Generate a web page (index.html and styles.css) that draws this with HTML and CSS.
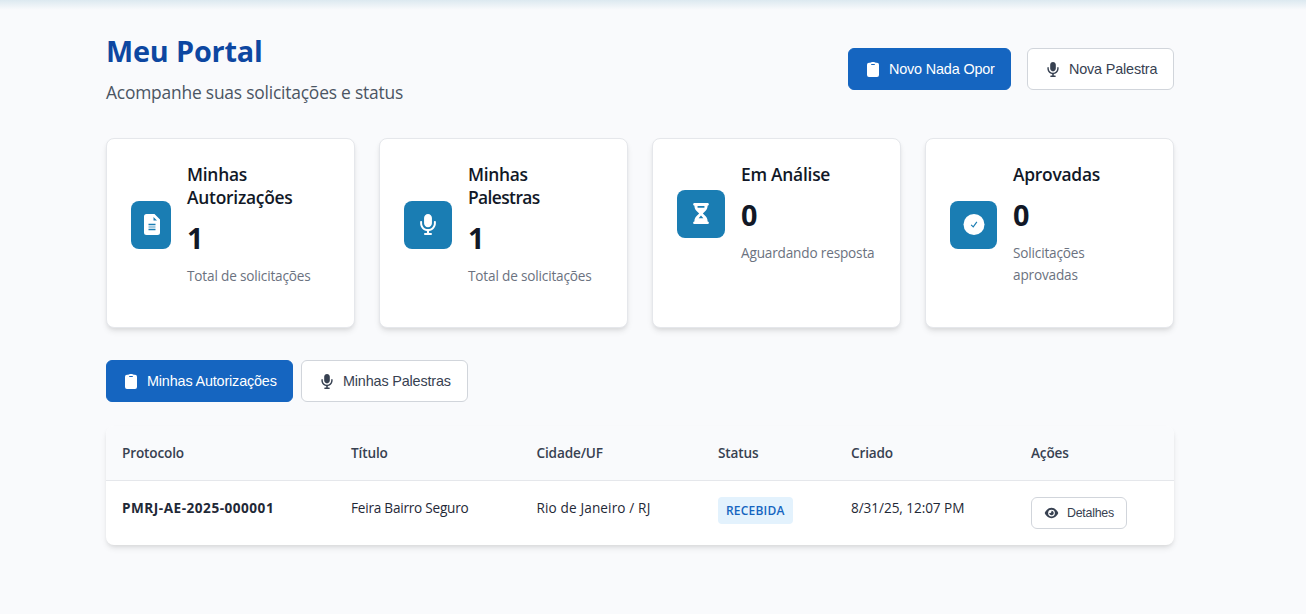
FILE: index.html
```
<!DOCTYPE html>
<html lang="pt-BR">
<head>
<meta charset="utf-8">
<title>Meu Portal</title>
<link rel="stylesheet" href="styles.css">
</head>
<body>
<svg class="sprite" aria-hidden="true">
  <symbol id="clipboard" viewBox="0 0 12 15"><path fill-rule="evenodd" d="M2 .8H3.200C3.800.2 4.600 0 6 0s2.200.2 2.800.8H10a2 2 0 0 1 2 2V13a2 2 0 0 1-2 2H2a2 2 0 0 1-2-2V2.800a2 2 0 0 1 2-2ZM4.200 2v1h3.600v-1Z"/></symbol>
  <symbol id="mic" viewBox="0 0 384 512"><path d="M192 0c-53 0-96 43-96 96v128c0 53 43 96 96 96s96-43 96-96V96c0-53-43-96-96-96zM48 192c0-13-11-24-24-24s-24 11-24 24v32c0 97 72 178 166 190v50h-46c-13 0-24 11-24 24s11 24 24 24h144c13 0 24-11 24-24s-11-24-24-24h-46v-50c94-12 166-93 166-190v-32c0-13-11-24-24-24s-24 11-24 24v32c0 80-64 144-144 144S48 304 48 224v-32z"/></symbol>
  <symbol id="file" viewBox="0 0 16 21"><path fill-rule="evenodd" d="M2.500 0H10.500L16 5.500V18.500a2.500 2.500 0 0 1-2.500 2.500h-11A2.500 2.500 0 0 1 0 18.500v-16A2.500 2.500 0 0 1 2.500 0ZM9.500 3v3.500h3.500Z"/><path class="line" d="M4.500 10.500h7M4.500 15.500h7"/><path class="line" d="M4.500 13h7" opacity=".6"/></symbol>
  <symbol id="hourglass" viewBox="0 0 384 512"><path d="M32 0C14.300 0 0 14.300 0 32s14.300 32 32 32v11c0 42.400 16.900 83.100 46.900 113.100L146.700 256l-67.800 67.900C48.900 353.900 32 394.600 32 437v11c-17.700 0-32 14.300-32 32s14.300 32 32 32h320c17.700 0 32-14.300 32-32s-14.300-32-32-32v-11c0-42.400-16.900-83.100-46.900-113.100L237.300 256l67.900-67.900c30-30 46.900-70.700 46.900-113.100V64c17.700 0 32-14.300 32-32S369.700 0 352 0H32z"/><path class="cut" d="M108 76h168v42H108zM192 306l58 64H134z"/></symbol>
  <symbol id="check" viewBox="0 0 22 22"><circle cx="11" cy="11" r="11"/><path class="tick" d="M8 11.300l2.200 2.200 3.800-5.300"/></symbol>
  <symbol id="eye" viewBox="0 0 576 512"><path fill-rule="evenodd" d="M288 32c-80.800 0-145.500 36.800-192.600 80.600C48.600 156 17.300 208 2.500 243.700c-3.300 7.900-3.300 16.700 0 24.600C17.300 304 48.600 356 95.400 399.400 142.500 443.200 207.200 480 288 480s145.500-36.800 192.600-80.600c46.800-43.500 78.100-95.400 93-131.100 3.300-7.900 3.300-16.700 0-24.600-14.900-35.700-46.200-87.700-93-131.100C433.500 68.800 368.800 32 288 32zM144 256a144 144 0 1 1 288 0 144 144 0 1 1-288 0z"/><path d="M288 192c0 35.300-28.700 64-64 64-7.100 0-13.900-1.200-20.300-3.300-5.500-1.800-11.900 1.600-11.700 7.400.3 6.900 1.300 13.800 3.200 20.700 13.700 51.200 66.400 81.600 117.600 67.900s81.600-66.400 67.900-117.600c-11.100-41.500-47.800-69.400-88.600-71.100-5.800-.2-9.200 6.100-7.400 11.700 2.100 6.400 3.300 13.200 3.300 20.300z"/></symbol>
</svg>
<main class="portal">
  <header class="page-header">
    <div>
      <h1 class="title">Meu Portal</h1>
      <p class="subtitle">Acompanhe suas solicitações e status</p>
    </div>
    <div class="actions">
      <button class="btn btn-primary btn-new"><svg class="icon"><use href="#clipboard"/></svg>Novo Nada Opor</button>
      <button class="btn btn-talk"><svg class="icon"><use href="#mic"/></svg>Nova Palestra</button>
    </div>
  </header>

  <section class="stats">
    <article class="card">
      <div class="tile tile-narrow"><svg class="tile-icon"><use href="#file"/></svg></div>
      <div class="card-text"><h3 class="card-title">Minhas<br>Autorizações</h3><div class="value">1</div><p class="note">Total de solicitações</p></div>
    </article>
    <article class="card">
      <div class="tile"><svg class="tile-icon"><use href="#mic"/></svg></div>
      <div class="card-text"><h3 class="card-title card-title-tight">Minhas<br>Palestras</h3><div class="value">1</div><p class="note">Total de solicitações</p></div>
    </article>
    <article class="card">
      <div class="tile"><svg class="tile-icon"><use href="#hourglass"/></svg></div>
      <div class="card-text"><h3 class="card-title">Em Análise</h3><div class="value">0</div><p class="note">Aguardando resposta</p></div>
    </article>
    <article class="card">
      <div class="tile tile-check"><svg class="tile-icon"><use href="#check"/></svg></div>
      <div class="card-text"><h3 class="card-title">Aprovadas</h3><div class="value">0</div><p class="note">Solicitações<br>aprovadas</p></div>
    </article>
  </section>

  <nav class="tabs">
    <button class="btn btn-primary tab-auth"><svg class="icon"><use href="#clipboard"/></svg>Minhas Autorizações</button>
    <button class="btn tab-talks"><svg class="icon"><use href="#mic"/></svg>Minhas Palestras</button>
  </nav>

  <section class="table">
    <div class="row head">
      <div>Protocolo</div><div>Título</div><div>Cidade/UF</div><div>Status</div><div>Criado</div><div>Ações</div>
    </div>
    <div class="row body">
      <div class="protocol">PMRJ-AE-2025-000001</div>
      <div class="name">Feira Bairro Seguro</div>
      <div class="city">Rio de Janeiro / RJ</div>
      <div><span class="badge">RECEBIDA</span></div>
      <div class="date">8/31/25, 12:07 PM</div>
      <div><button class="btn btn-small"><svg class="icon icon-eye"><use href="#eye"/></svg>Detalhes</button></div>
    </div>
  </section>
</main>
</body>
</html>
```
FILE: styles.css
```
* { box-sizing: border-box; }
body {
  margin: 0;
  min-height: 614px;
  background: linear-gradient(#dce9f0, #f9fafc 10px) no-repeat #f9fafc;
  font-family: "Open Sans", "Noto Sans", sans-serif;
  color: #1f2937;
}
h1, h3, p { margin: 0; }
.sprite { display: none; }
.portal { width: 1068px; margin-left: 106px; padding-top: 32px; }

.page-header { display: flex; justify-content: space-between; height: 106px; }
.title { font-size: 28.800px; line-height: 37px; font-weight: 700; color: #0d47a1; letter-spacing: -.15px; }
.subtitle { margin-top: 9px; font-size: 17.400px; line-height: 28px; color: #4b5563; letter-spacing: -.2px; }
.actions { display: flex; gap: 16px; padding-top: 16px; }

.btn {
  display: flex; align-items: center; gap: 8px;
  height: 42px; padding: 0 16px;
  border: 1px solid #d1d5db; border-radius: 6px;
  background: #fff; color: #374151;
  font: 14.400px "Liberation Sans", Arial, sans-serif;
  letter-spacing: -.16px;
  white-space: nowrap;
}
.btn-primary { background: #1565c0; border-color: #1565c0; color: #fff; }
.btn-new { width: 163px; }
.btn-talk { width: 147px; }
.tab-auth { width: 187px; }
.tab-talks { width: 167px; }
.icon { width: 16px; height: 15px; fill: currentColor; flex: none; }
.btn-talk, .tab-talks { padding-left: 17px; }

.stats { display: grid; grid-template-columns: repeat(4, 249px); gap: 24px; }
.card {
  display: flex; align-items: flex-start; gap: 16px;
  height: 190px; padding: 24px;
  background: #fff; border: 1px solid #e5e7eb; border-radius: 8px;
  box-shadow: 0 4px 6px -1px rgba(0,0,0,.1), 0 2px 4px -1px rgba(0,0,0,.06);
}
.card-text { white-space: nowrap; }
.tile {
  display: flex; align-items: flex-start; justify-content: center; flex: none;
  width: 48px; height: 48px; margin-top: 38px; padding-top: 13px;
  border-radius: 8px; background: #1a7db3;
}
.card:nth-child(3) .tile { margin-top: 27px; }
.tile-narrow { width: 40px; padding-left: 1px; }
.tile-check { width: 47px; }
.tile-icon { width: 22px; height: 21px; fill: #fff; }
.tick { fill: none; stroke: #1a7db3; stroke-width: 1.2; }
.line { fill: none; stroke: #1a7db3; stroke-width: 1.3; }
.cut { fill: #1a7db3; }
.card-title { font-size: 17.400px; line-height: 23px; font-weight: 600; color: #111827; letter-spacing: -.25px; }
.card-title-tight { letter-spacing: -.6px; }
.card-title-tight::first-line { letter-spacing: -.3px; }
.value { margin-top: 11px; font-size: 28.800px; line-height: 36px; font-weight: 700; color: #111827; }
.note { margin-top: 9px; font-size: 13.600px; line-height: 22px; color: #6b7280; letter-spacing: -.17px; }

.tabs { display: flex; gap: 8px; margin-top: 32px; }

.table {
  margin-top: 24px; border-radius: 8px; overflow: hidden; background: #fff;
  box-shadow: 0 4px 6px -1px rgba(0,0,0,.1), 0 2px 4px -1px rgba(0,0,0,.06);
}
.row {
  display: grid; grid-template-columns: 229px 185.500px 181.500px 133px 180px 1fr;
  padding: 16px 0 0 16px; font-size: 13.600px; line-height: 22px; white-space: nowrap;
}
.head { height: 55px; background: #f9fafc; border-bottom: 1px solid #e5e7eb; font-weight: 600; color: #374151; letter-spacing: -.15px; }
.body { height: 64px; }
.protocol { font-weight: 700; letter-spacing: .5px; }
.name { letter-spacing: -.23px; }
.city { letter-spacing: .13px; }
.date { letter-spacing: -.07px; }
.badge {
  display: block; width: 75px; height: 27px; padding-left: 8px; border-radius: 4px;
  background: #e3f2fd; color: #1565c0;
  font-size: 12px; line-height: 27px; font-weight: 600; letter-spacing: .2px;
}
.btn-small { width: 96px; height: 32px; padding: 0 12px; font-size: 12.400px; letter-spacing: -.25px; }
.icon-eye { width: 15px; height: 12px; }
```
